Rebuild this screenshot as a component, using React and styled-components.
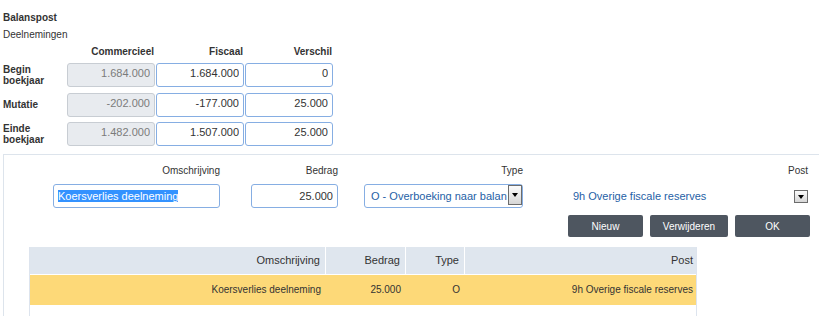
import React from 'react';
import styled, { createGlobalStyle, css } from 'styled-components';

const GlobalStyle = createGlobalStyle`
  html, body {
    margin: 0;
    padding: 0;
    overflow: hidden;
    background: #fff;
  }
  body {
    font-family: "Liberation Sans", Arial, sans-serif;
    color: #333;
  }
`;

const Page = styled.div`
  height: 316px;
  box-sizing: border-box;
  padding: 11px 0 0 3px;
  overflow: hidden;
`;

const Title = styled.div`
  font-size: 10px;
  font-weight: bold;
  line-height: 14px;
`;

const Subtitle = styled.div`
  font-size: 10px;
  line-height: 14px;
  margin-top: 3px;
`;

const columns = css`
  display: grid;
  grid-template-columns: 63px 88px 88px 88px;
  column-gap: 1px;
`;

const HeadRow = styled.div`
  ${columns};
  font-size: 10px;
  font-weight: bold;
  line-height: 14px;
  margin: 3px 0 4px;
`;

const HeadCell = styled.div`
  text-align: right;
  padding-right: 1px;
`;

const ValueRow = styled.div`
  ${columns};
  align-items: center;

  & + & {
    margin-top: 5.5px;
  }
`;

const RowLabel = styled.div`
  font-size: 10px;
  font-weight: bold;
  line-height: 11px;
`;

const NumberInput = styled.input`
  height: 24px;
  width: 100%;
  box-sizing: border-box;
  margin: 0;
  border: 1px solid ${p => (p.disabled ? '#c8cdd3' : '#86aee3')};
  border-radius: 3px;
  background: ${p => (p.disabled ? '#e8ebef' : '#fff')};
  color: ${p => (p.disabled ? '#7b7b7b' : '#333')};
  font-family: inherit;
  font-size: 11px;
  text-align: right;
  padding: 0 4px ${p => (p.$lift ? '4px' : '1px')};
  outline: none;
  -webkit-text-fill-color: ${p => (p.disabled ? '#7b7b7b' : '#333')};
  opacity: 1;
`;

const Panel = styled.div`
  margin: 8px -40px 0 0;
  border: 1px solid #dde4ec;
  border-right: none;
  border-bottom: none;
  padding: 9.5px 0 40px;
`;

const FormArea = styled.div`
  width: 806px;
`;

const Fields = styled.div`
  display: flex;
  padding-left: 49px;
`;

const Field = styled.div`
  display: flex;
  flex-direction: column;
  margin-left: ${p => p.$gap || 0}px;
  ${p => (p.$width ? `width: ${p.$width}px;` : 'flex: 1; padding-right: 2px;')}
`;

const FieldLabel = styled.div`
  font-size: 10px;
  line-height: 12px;
  text-align: right;
  margin-bottom: 7.5px;
`;

const TextBox = styled.div`
  height: 24px;
  box-sizing: border-box;
  border: 1px solid #86aee3;
  border-radius: 3px;
  padding: 0 4px;
  display: flex;
  align-items: center;
  font-size: 11px;
  white-space: nowrap;
  overflow: hidden;
`;

const Selected = styled.span`
  background: #3392ff;
  color: #fff;
  line-height: 12px;
`;

const SelectBox = styled.div`
  height: 24px;
  box-sizing: border-box;
  border: 1px solid #86aee3;
  border-radius: 3px;
  padding-left: 6px;
  display: flex;
  align-items: flex-start;
  font-size: 11px;
  color: #1f5fa6;
`;

const SelectText = styled.span`
  flex: 1;
  overflow: hidden;
  white-space: nowrap;
  line-height: 22px;
`;

const DropButton = styled.span`
  flex: none;
  width: 14px;
  height: ${p => (p.$small ? 13 : 20)}px;
  box-sizing: border-box;
  margin-top: ${p => (p.$small ? 1 : 0)}px;
  border: 1px solid #6c6c6c;
  background: linear-gradient(#fbfbfb, #d6d6d6);
  display: flex;
  align-items: center;
  justify-content: center;

  &::after {
    content: '';
    border-left: 3.5px solid transparent;
    border-right: 3.5px solid transparent;
    border-top: 4px solid #000;
  }
`;

const PostControl = styled.div`
  height: 24px;
  display: flex;
  align-items: center;
  font-size: 11px;
  color: #1f5fa6;
`;

const PostText = styled.span`
  flex: 1;
  padding-left: 1px;
`;

const ButtonRow = styled.div`
  display: flex;
  justify-content: flex-end;
  gap: 7px;
  margin-top: 7px;
`;

const Button = styled.button`
  width: ${p => p.$width}px;
  height: 22px;
  margin: 0;
  padding: 0;
  border: none;
  border-radius: 2px;
  background: #4e5660;
  color: #fff;
  font-family: inherit;
  font-size: 10px;
`;

const Table = styled.div`
  width: 668px;
  height: 90px;
  box-sizing: border-box;
  margin: 10px 0 0 25px;
  border-left: 1px solid #dde4ee;
  border-right: 1px solid #dde4ee;
`;

const tableColumns = css`
  display: grid;
  grid-template-columns: 296px 80px 59px 1fr;
`;

const TableHead = styled.div`
  ${tableColumns};
  height: 27px;
  background: #dfe6ee;
  font-size: 11px;
  line-height: 27px;
`;

const Th = styled.div`
  text-align: right;
  padding-right: 5px;
  border-right: 1px solid #fff;

  &:last-child {
    border-right: none;
    padding-right: 3px;
  }
`;

const TableRow = styled.div`
  ${tableColumns};
  height: 30px;
  margin-top: 1px;
  background: #fdd978;
  font-size: 10px;
  line-height: 30px;
`;

const Td = styled.div`
  text-align: right;
  padding-right: 5px;

  &:last-child {
    padding-right: 3px;
  }
`;

const balance = [
  { label: ['Begin', 'boekjaar'], values: ['1.684.000', '1.684.000', '0'] },
  { label: ['Mutatie'], values: ['-202.000', '-177.000', '25.000'] },
  { label: ['Einde', 'boekjaar'], values: ['1.482.000', '1.507.000', '25.000'] },
];

const mutations = [
  { omschrijving: 'Koersverlies deelneming', bedrag: '25.000', type: 'O', post: '9h Overige fiscale reserves' },
];

export default function App() {
  return (
    <>
      <GlobalStyle />
      <Page>
        <Title>Balanspost</Title>
        <Subtitle>Deelnemingen</Subtitle>

        <HeadRow>
          <div />
          <HeadCell>Commercieel</HeadCell>
          <HeadCell>Fiscaal</HeadCell>
          <HeadCell>Verschil</HeadCell>
        </HeadRow>
        {balance.map(row => (
          <ValueRow key={row.label.join(' ')}>
            <RowLabel>
              {row.label.map(l => (
                <div key={l}>{l}</div>
              ))}
            </RowLabel>
            <NumberInput $lift disabled value={row.values[0]} readOnly />
            <NumberInput $lift value={row.values[1]} readOnly />
            <NumberInput $lift value={row.values[2]} readOnly />
          </ValueRow>
        ))}

        <Panel>
          <FormArea>
            <Fields>
              <Field $width={167}>
                <FieldLabel>Omschrijving</FieldLabel>
                <TextBox>
                  <Selected>Koersverlies deelneming</Selected>
                </TextBox>
              </Field>
              <Field $width={87} $gap={31}>
                <FieldLabel>Bedrag</FieldLabel>
                <NumberInput value="25.000" readOnly />
              </Field>
              <Field $width={159} $gap={26}>
                <FieldLabel>Type</FieldLabel>
                <SelectBox>
                  <SelectText>O - Overboeking naar balan</SelectText>
                  <DropButton />
                </SelectBox>
              </Field>
              <Field $gap={49}>
                <FieldLabel>Post</FieldLabel>
                <PostControl>
                  <PostText>9h Overige fiscale reserves</PostText>
                  <DropButton $small />
                </PostControl>
              </Field>
            </Fields>
            <ButtonRow>
              <Button $width={75}>Nieuw</Button>
              <Button $width={78}>Verwijderen</Button>
              <Button $width={75}>OK</Button>
            </ButtonRow>
          </FormArea>

          <Table>
            <TableHead>
              <Th>Omschrijving</Th>
              <Th>Bedrag</Th>
              <Th>Type</Th>
              <Th>Post</Th>
            </TableHead>
            {mutations.map(m => (
              <TableRow key={m.omschrijving}>
                <Td>{m.omschrijving}</Td>
                <Td>{m.bedrag}</Td>
                <Td>{m.type}</Td>
                <Td>{m.post}</Td>
              </TableRow>
            ))}
          </Table>
        </Panel>
      </Page>
    </>
  );
}
